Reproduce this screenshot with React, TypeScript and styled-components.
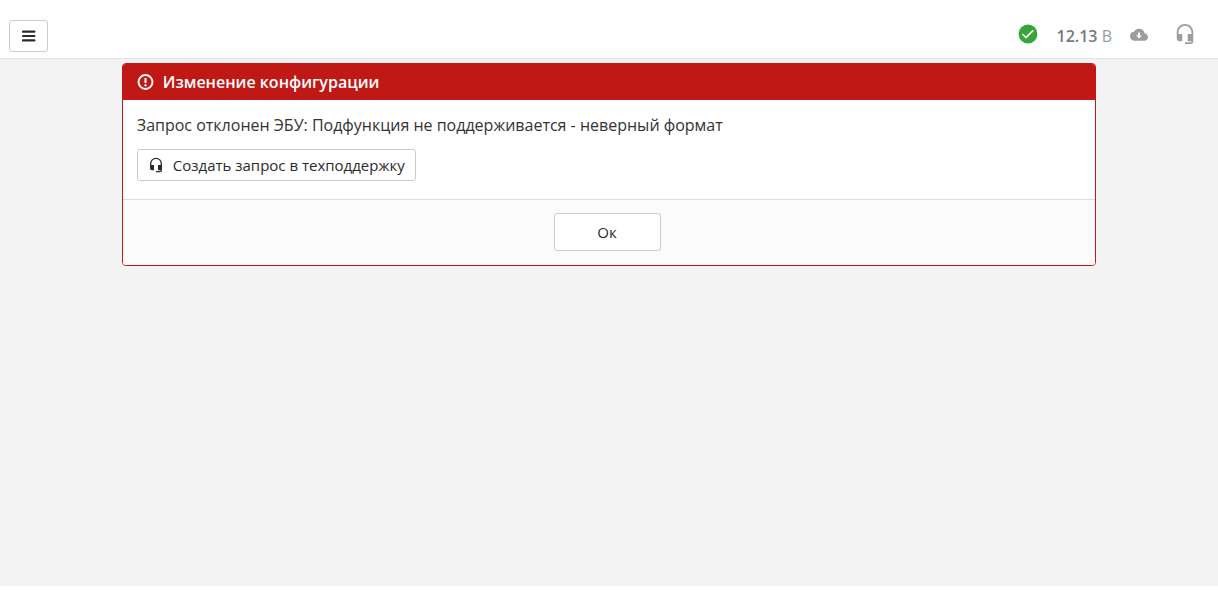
import React from "react";
import styled, { createGlobalStyle } from "styled-components";

const GlobalStyle = createGlobalStyle`
  *, *::before, *::after { box-sizing: border-box; }
  body {
    margin: 0;
    background: #fff;
    color: #222;
    font-family: "Open Sans", "Noto Sans", sans-serif;
    font-size: 16px;
    line-height: 24px;
  }
`;

const Page = styled.div`
  display: flex;
  flex-direction: column;
  min-height: 100vh;
  padding-bottom: 7px;
`;

const TopBar = styled.header`
  display: flex;
  align-items: center;
  justify-content: space-between;
  padding: 20px 22px 6px 9px;
  border-bottom: 1px solid #e1e4e7;
`;

const Button = styled.button<{ $size: "icon" | "normal" | "wide" }>`
  display: inline-flex;
  align-items: center;
  justify-content: center;
  gap: 9px;
  height: ${(p) => (p.$size === "wide" ? 38 : 32)}px;
  min-width: ${(p) => (p.$size === "icon" ? 39 : p.$size === "wide" ? 107 : 0)}px;
  padding: 0 ${(p) => (p.$size === "normal" ? 10 : 0)}px;
  border: 1px solid #ccc;
  border-radius: 3px;
  background: #fff;
  color: #2b2b2b;
  font: inherit;
  font-size: 15px;
  cursor: pointer;
`;

const Status = styled.div`
  display: flex;
  align-items: center;
  padding-bottom: 4px;
  color: #9b9da0;
`;

const Voltage = styled.span`
  margin: 0 18px 0 19px;
  padding-top: 4px;

  strong {
    color: #77797c;
    font-weight: 600;
  }
`;

const IconLink = styled.a`
  display: flex;
  color: inherit;

  & + & {
    margin-left: 26px;
  }
`;

const Content = styled.main`
  flex: 1;
  padding: 4px 10%;
  background: #f3f3f3;
`;

const Panel = styled.section`
  border: 1px solid #c01815;
  border-radius: 4px;
  background: #fff;
  overflow: hidden;
`;

const PanelHeader = styled.h1`
  display: flex;
  align-items: center;
  gap: 9px;
  height: 36px;
  margin: 0;
  padding: 0 14px;
  background: #c01815;
  color: #fff;
  font-size: 16px;
  font-weight: 600;
`;

const PanelBody = styled.div`
  padding: 13px 14px 18px;
`;

const Message = styled.p`
  margin: 0 0 12px;
  color: #333;
`;

const PanelFooter = styled.footer`
  display: flex;
  justify-content: center;
  padding: 13px 4px 14px 0;
  border-top: 1px solid #ddd;
  background: #fbfbfb;
`;

const Headset = ({ size }: { size: number }) => (
  <svg width={size} height={size} viewBox="0 0 24 24" fill="currentColor" aria-hidden="true">
    <path d="M12 1a9 9 0 0 0-9 9v7a3 3 0 0 0 3 3h3v-8H5v-2a7 7 0 0 1 14 0v2h-4v8h4v1h-7v2h6a3 3 0 0 0 3-3V10a9 9 0 0 0-9-9z" />
  </svg>
);

const MenuIcon = () => (
  <svg width="14" height="12" viewBox="0 0 14 12" aria-hidden="true">
    <path d="M1 1.600h11.400M1 6h11.400M1 10.400h11.400" stroke="currentColor" strokeWidth="2.200" strokeLinecap="round" />
  </svg>
);

const CheckIcon = () => (
  <svg width="20" height="20" viewBox="0 0 20 20" role="img" aria-label="OK">
    <circle cx="10" cy="10" r="9.4" fill="#37a637" />
    <path d="M4.4 10l3.600 3.600 7.200-7.200" fill="none" stroke="#fff" strokeWidth="1.700" />
  </svg>
);

const CloudIcon = () => (
  <svg width="18" height="18" viewBox="0 0 24 24" fill="currentColor" aria-hidden="true">
    <path d="M19.350 11.040A7.490 7.490 0 0 0 12 5C9.110 5 6.600 6.640 5.350 9.040A5.994 5.994 0 0 0 0 15c0 3.310 2.690 6 6 6h13c2.760 0 5-2.240 5-5 0-2.640-2.050-4.780-4.650-4.960zM16 14l-4 4-4-4h2.700v-4h2.600v4H16z" />
  </svg>
);

const AlertIcon = () => (
  <svg width="17" height="17" viewBox="0 0 17 17" aria-hidden="true">
    <circle cx="8.500" cy="8" r="7" fill="none" stroke="currentColor" strokeWidth="1.900" />
    <path d="M7.500 3.900h2v5h-2zM7.500 10.300h2v2h-2z" fill="currentColor" />
  </svg>
);

export default function App() {
  return (
    <>
      <GlobalStyle />
      <Page>
        <TopBar>
          <Button type="button" $size="icon" aria-label="Меню">
            <MenuIcon />
          </Button>
          <Status>
            <CheckIcon />
            <Voltage>
              <strong>12.13</strong> В
            </Voltage>
            <IconLink href="#cloud" aria-label="Загрузка">
              <CloudIcon />
            </IconLink>
            <IconLink href="#support" aria-label="Техподдержка">
              <Headset size={22} />
            </IconLink>
          </Status>
        </TopBar>
        <Content>
          <Panel>
            <PanelHeader>
              <AlertIcon />
              Изменение конфигурации
            </PanelHeader>
            <PanelBody>
              <Message>Запрос отклонен ЭБУ: Подфункция не поддерживается - неверный формат</Message>
              <Button type="button" $size="normal">
                <Headset size={16} />
                Создать запрос в техподдержку
              </Button>
            </PanelBody>
            <PanelFooter>
              <Button type="button" $size="wide">
                Ок
              </Button>
            </PanelFooter>
          </Panel>
        </Content>
      </Page>
    </>
  );
}
